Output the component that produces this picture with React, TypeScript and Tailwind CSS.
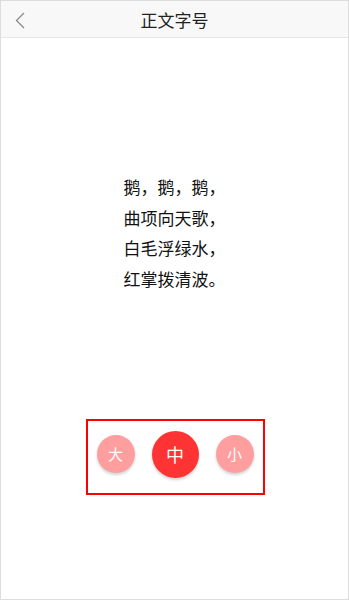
import React, { useState } from 'react';

const lines = ['鹅，鹅，鹅，', '曲项向天歌，', '白毛浮绿水，', '红掌拨清波。'];

const sizes = [
  { key: 'large', label: '大' },
  { key: 'medium', label: '中' },
  { key: 'small', label: '小' },
];

export default function App() {
  const [active, setActive] = useState('medium');

  return (
    <div
      className="h-[600px] w-[349px] border border-[#dddddd] bg-white flex flex-col"
      style={{ fontFamily: '"Noto Sans CJK SC", "Noto Sans", sans-serif' }}
    >
      {/* header */}
      <div className="relative h-[37px] shrink-0 bg-[#f8f8f8] border-b border-[#e6e6e6] flex items-center justify-center">
        <button className="absolute left-[12px] top-[10px] w-[14px] h-[18px] flex items-center justify-center">
          <svg width="10" height="17" viewBox="0 0 10 17" fill="none">
            <path d="M9 1L1.5 8.5L9 16" stroke="#8a8a8a" strokeWidth="1.3" />
          </svg>
        </button>
        <h1 className="text-[17px] text-[#222] leading-none">正文字号</h1>
      </div>

      {/* poem */}
      <div className="pt-[134px] flex flex-col items-center">
        <div className="text-[17px] leading-[30.7px] text-[#111]">
          {lines.map(l => (
            <p key={l}>{l}</p>
          ))}
        </div>
      </div>

      {/* size picker */}
      <div className="mt-[124px] flex justify-center">
        <div className="ml-[1px] w-[179px] h-[76px] border-2 border-[#ff0000] pb-[5px] flex items-center justify-center gap-[17px]">
          {sizes.map(s => {
            const on = active === s.key;
            return (
              <button
                key={s.key}
                onClick={() => setActive(s.key)}
                className={`rounded-full flex items-center justify-center text-white shadow-[0_2px_3px_rgba(0,0,0,0.18)] ${
                  on ? 'w-[47px] h-[47px] bg-[#fe3333] text-[18px]' : 'w-[38px] h-[38px] bg-[#ff9e9e] text-[15px]'
                }`}
              >
                {s.label}
              </button>
            );
          })}
        </div>
      </div>
    </div>
  );
}
